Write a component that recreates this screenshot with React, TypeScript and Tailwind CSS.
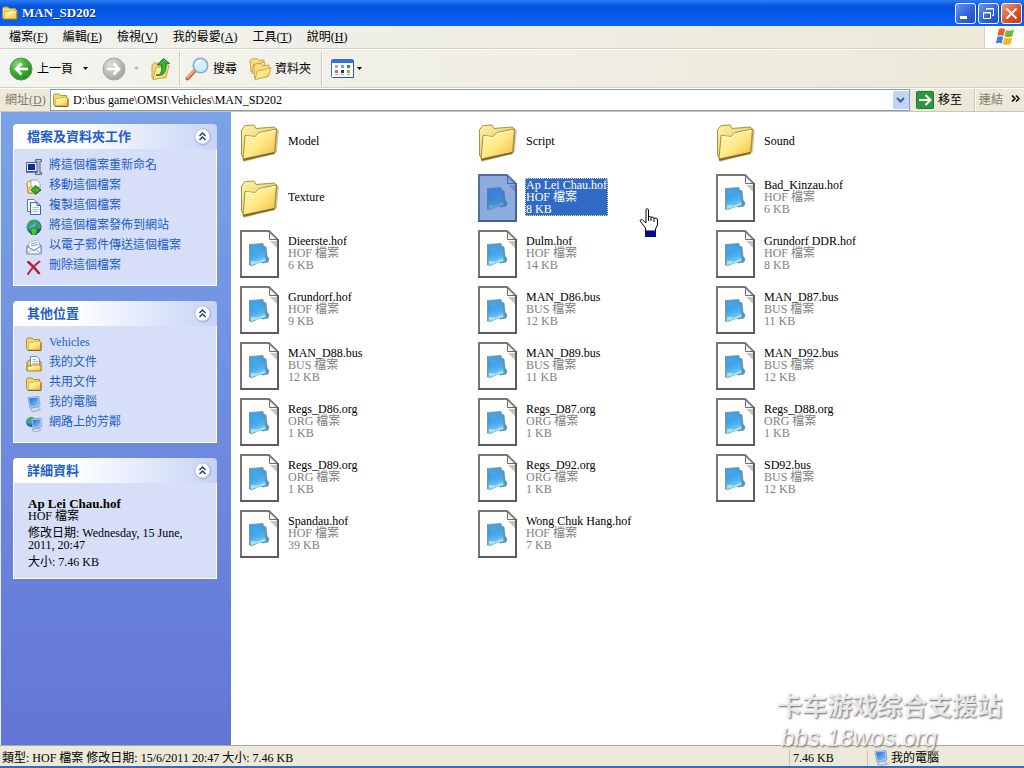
import type { ReactNode } from 'react';
import clsx from 'clsx';

const menus = [
  { label: '檔案', shortcut: 'F' },
  { label: '編輯', shortcut: 'E' },
  { label: '檢視', shortcut: 'V' },
  { label: '我的最愛', shortcut: 'A' },
  { label: '工具', shortcut: 'T' },
  { label: '說明', shortcut: 'H' },
];

const files = [
  { name: 'Model' },
  { name: 'Script' },
  { name: 'Sound' },
  { name: 'Texture' },
  { name: 'Ap Lei Chau.hof', type: 'HOF 檔案', size: '8 KB', selected: true },
  { name: 'Bad_Kinzau.hof', type: 'HOF 檔案', size: '6 KB' },
  { name: 'Dieerste.hof', type: 'HOF 檔案', size: '6 KB' },
  { name: 'Dulm.hof', type: 'HOF 檔案', size: '14 KB' },
  { name: 'Grundorf DDR.hof', type: 'HOF 檔案', size: '8 KB' },
  { name: 'Grundorf.hof', type: 'HOF 檔案', size: '9 KB' },
  { name: 'MAN_D86.bus', type: 'BUS 檔案', size: '12 KB' },
  { name: 'MAN_D87.bus', type: 'BUS 檔案', size: '11 KB' },
  { name: 'MAN_D88.bus', type: 'BUS 檔案', size: '12 KB' },
  { name: 'MAN_D89.bus', type: 'BUS 檔案', size: '11 KB' },
  { name: 'MAN_D92.bus', type: 'BUS 檔案', size: '12 KB' },
  { name: 'Regs_D86.org', type: 'ORG 檔案', size: '1 KB' },
  { name: 'Regs_D87.org', type: 'ORG 檔案', size: '1 KB' },
  { name: 'Regs_D88.org', type: 'ORG 檔案', size: '1 KB' },
  { name: 'Regs_D89.org', type: 'ORG 檔案', size: '1 KB' },
  { name: 'Regs_D92.org', type: 'ORG 檔案', size: '1 KB' },
  { name: 'SD92.bus', type: 'BUS 檔案', size: '12 KB' },
  { name: 'Spandau.hof', type: 'HOF 檔案', size: '39 KB' },
  { name: 'Wong Chuk Hang.hof', type: 'HOF 檔案', size: '7 KB' },
];

// Gradients shared by all the icons
function IconDefs() {
  return (
    <svg className="absolute h-0 w-0" aria-hidden="true">
      <defs>
        <linearGradient id="folder" x1="0" y1="0" x2="1" y2="1">
          <stop offset="0" stopColor="#fffcb8" />
          <stop offset="0.5" stopColor="#ffe988" />
          <stop offset="1" stopColor="#f0b83c" />
        </linearGradient>
        <linearGradient id="folderBack" x1="0" y1="0" x2="1" y2="1">
          <stop offset="0" stopColor="#fff3a8" />
          <stop offset="1" stopColor="#e0b548" />
        </linearGradient>
        <linearGradient id="sheet" x1="0.3" y1="0" x2="0.6" y2="1">
          <stop offset="0" stopColor="#4a9fd8" />
          <stop offset="0.4" stopColor="#3d9ee6" />
          <stop offset="1" stopColor="#84d4f4" />
        </linearGradient>
        <radialGradient id="green" cx="0.35" cy="0.3" r="0.8">
          <stop offset="0" stopColor="#8ed67e" />
          <stop offset="0.5" stopColor="#3dac34" />
          <stop offset="1" stopColor="#1f8a1c" />
        </radialGradient>
        <radialGradient id="gray" cx="0.35" cy="0.3" r="0.8">
          <stop offset="0" stopColor="#dcdcda" />
          <stop offset="0.6" stopColor="#b8b8b5" />
          <stop offset="1" stopColor="#9c9c99" />
        </radialGradient>
        <radialGradient id="globe" cx="0.35" cy="0.3" r="0.8">
          <stop offset="0" stopColor="#8fd0f4" />
          <stop offset="0.5" stopColor="#2f7fc4" />
          <stop offset="1" stopColor="#123f7d" />
        </radialGradient>
        <linearGradient id="screen" x1="0" y1="0" x2="1" y2="1">
          <stop offset="0" stopColor="#2163d6" />
          <stop offset="1" stopColor="#8fd4fb" />
        </linearGradient>
      </defs>
    </svg>
  );
}

function LargeFolder() {
  return (
    <svg viewBox="0 -2 39 50" className="h-[50px] w-[39px] shrink-0" aria-hidden="true">
      <path d="M4 43L36 34L38 12" fill="none" stroke="#b9b294" strokeWidth="2" opacity="0.6" />
      <path
        d="M1.500 37V12L4 8.500L5.500 7.500L14 7L16 10.500L34 9L37 11.500L35 34L4 41Z"
        fill="url(#folderBack)"
        stroke="#a39244"
      />
      <path
        d="M3 41L5 17.500L15 18.500L19 14.500L36.500 11L34.500 34.500Z"
        fill="url(#folder)"
        stroke="#a88f3a"
      />
      <path d="M3 42L34.500 35" stroke="#8a6a24" strokeWidth="2" />
      <path d="M6 18.500L15.500 19.500L20 15.500L35 12.500" fill="none" stroke="#fffde0" />
    </svg>
  );
}

function FileIcon({ selected }: { selected?: boolean }) {
  return (
    <svg viewBox="0 -2 39 50" className="h-[50px] w-[39px] shrink-0" aria-hidden="true">
      <path d="M1 1H29L38 10V47H1Z" fill="#fdfdfb" />
      <path d="M1 47V1H29L38 10" fill="none" stroke="#77776f" strokeWidth="2" />
      <path d="M38 9V47H0" fill="none" stroke="#5c5c58" strokeWidth="2" />
      <path d="M29.500 2V9.500H37Z" fill="#f4f4f0" stroke="#6b6b66" />
      <path d="M30 11H37V18Z" fill="#c4c4c1" />
      <path d="M23 16L26 17L27 26L29 29L28 32L22 33Z" fill="#4a9ccc" stroke="#5f7c8c" strokeWidth="0.600" />
      <path d="M9.500 14.500L23 13.500L26 31L18 33L12 35.500L10 35Z" fill="url(#sheet)" stroke="#6b9bb2" strokeWidth="0.800" />
      <path d="M11 31L18 31.500L25 28.500L25.500 31L18 33L11 35Z" fill="#a6e4f4" />
      <path d="M9.500 14V35.500" stroke="#7f97a2" />
      <path d="M12 17L22 16.500L24 26L13 28Z" fill="#4aaaf0" opacity="0.5" />
      {selected && <path d="M0 0H29L39 10V48H0Z" fill="#316ac5" opacity="0.55" />}
    </svg>
  );
}

function SmallFolder() {
  return (
    <svg viewBox="0 0 16 16" className="size-4 shrink-0" aria-hidden="true">
      <path d="M0.500 12V3.500L1.500 2H6L7.500 3.500H13.500V5.500L15 6V13L14 14.500H2Z" fill="#f3d670" stroke="#b78f2b" />
      <path d="M2.500 13.500V6.500H7L8 5.500H14.500V13.500Z" fill="url(#folder)" stroke="#d8ae40" strokeWidth="0.800" />
      <path d="M2 14.500H15V7" fill="none" stroke="#8c6a1a" />
    </svg>
  );
}

function Icon({ children }: { children: ReactNode }) {
  return (
    <svg viewBox="0 0 16 16" className="size-4 shrink-0" aria-hidden="true">
      {children}
    </svg>
  );
}

function RenameIcon() {
  return (
    <Icon>
      <path d="M0.500 3.500H12.500V12.500H0.500Z" fill="#e8ebf5" stroke="#4b5d86" />
      <path d="M2 5H9V11H2Z" fill="#0b2f9c" />
      <path d="M0 13H11" stroke="#4f587a" strokeWidth="1.500" />
      <path d="M9.500 0.500H15.500V2.500H14V13.500H15.500V15.500H9.500V13.500H11V2.500H9.500Z" fill="#bac0d4" stroke="#5b6384" />
    </Icon>
  );
}

function MoveIcon() {
  return (
    <Icon>
      <path d="M1 4L3 2H7L8 4H12V14H2Z" fill="url(#folder)" stroke="#a9882e" />
      <path d="M5 1H11L14 4V11H5Z" fill="#fff" stroke="#8797b7" strokeWidth="0.800" />
      <path d="M2 14L4 8H13L12 14Z" fill="url(#folder)" stroke="#a9882e" strokeWidth="0.800" />
      <path d="M5 11C6 8.500 8 9 9 9V6.500L15 11L9 15.500V13C7 13 6 13 5 11Z" fill="#3fb52a" stroke="#176f12" />
    </Icon>
  );
}

function CopyIcon() {
  return (
    <Icon>
      <path d="M1.500 0.500H8L10.500 3V12.500H1.500Z" fill="#fff" stroke="#5d7da1" />
      <path d="M4.500 3.500H11L14.500 6.500V15.500H4.500Z" fill="#f4faff" stroke="#3c6693" />
      <path d="M11 3.500V6.500H14.500" fill="none" stroke="#3c6693" />
      <path d="M6.500 8.500H12.500M6.500 10.500H12.500M6.500 12.500H12.500" fill="none" stroke="#9cc0e2" />
    </Icon>
  );
}

function PublishIcon() {
  return (
    <Icon>
      <circle cx="8" cy="8" r="7.500" fill="url(#globe)" />
      <path d="M3 3C6 0 8 1 9 3L6 7L3 8L1 7ZM10 2L14 5L15 9L12 10L10 6Z" fill="#39a84c" />
      <path d="M8 8L13 12.500H10.500V16H5.500V12.500H3Z" fill="#47c62f" stroke="#17721a" strokeWidth="0.800" />
    </Icon>
  );
}

function MailIcon() {
  return (
    <Icon>
      <path d="M1 7L8 2L15 6V14.500H1Z" fill="#e9c77d" stroke="#8590a6" />
      <path d="M3 3L12 1L14 8L8 11L3 9Z" fill="#fff" stroke="#92a8ce" strokeWidth="0.700" />
      <path d="M5 5L11 3.500M5 7L12 5.500" stroke="#6c9bdb" />
      <path d="M1 7.500L8 11.500L15 7V15H1Z" fill="#f5f9ff" stroke="#7287ad" />
      <path d="M1 15L6 10.500M15 15L10 10.500" stroke="#9aabc9" />
    </Icon>
  );
}

function DeleteIcon() {
  return (
    <Icon>
      <path d="M1 3L3 2.500C6 5 11 10 14 14.500L12.500 15C9 10.500 5 6.500 1 3Z" fill="#b51b33" stroke="#b51b33" />
      <path d="M13.500 2.500C9 6 5 10 2 15" fill="none" stroke="#c0223a" strokeWidth="2" strokeLinecap="round" />
    </Icon>
  );
}

function DocumentsIcon() {
  return (
    <Icon>
      <path d="M1 6L3 4H13L15 6V14.500H1Z" fill="#f0cf62" stroke="#a77f1b" />
      <path d="M4.500 0.500H11L13.500 3V10H4.500Z" fill="#fff" stroke="#6b8fbd" />
      <path d="M6.500 3.500H10M6.500 5.500H12M6.500 7.500H12" stroke="#8fb8e6" />
      <path d="M1 10H5L6 9H15V15H1Z" fill="url(#folder)" stroke="#a77f1b" />
    </Icon>
  );
}

function ComputerIcon() {
  return (
    <Icon>
      <path d="M6 12L12 11L14.500 14L7 15.500L4 14Z" fill="#d9dde8" stroke="#8790a6" strokeWidth="0.700" />
      <path d="M2 1.500L13 0.500L14 10L4 12Z" fill="#c5ddf7" stroke="#7b9ecb" strokeWidth="0.800" />
      <path d="M3 2.500L12 1.500L13 9.300L4.800 10.800Z" fill="url(#screen)" />
    </Icon>
  );
}

function NetworkIcon() {
  return (
    <Icon>
      <circle cx="5" cy="6" r="5" fill="url(#globe)" />
      <path d="M1 4L4 1L7 2L5 5L2 7Z" fill="#3fae4b" />
      <path d="M8 13L13 12L15 14L9 16L6 14Z" fill="#d9dde8" stroke="#8790a6" strokeWidth="0.700" />
      <path d="M5.500 3L15 2L15.500 11L7 12.500Z" fill="#c5ddf7" stroke="#7b9ecb" strokeWidth="0.800" />
      <path d="M6.500 4L14 3.200L14.500 10.200L7.800 11.400Z" fill="url(#screen)" />
    </Icon>
  );
}

function RoundArrow({ forward }: { forward?: boolean }) {
  return (
    <svg viewBox="0 0 24 24" className="size-6 shrink-0" aria-hidden="true">
      <circle cx="12" cy="12" r="11" fill={forward ? 'url(#gray)' : 'url(#green)'} stroke={forward ? '#a5a5a2' : '#57965a'} />
      <path
        d={forward ? 'M5 12H17M11.500 6.500L17 12L11.500 17.500' : 'M19 12H7M12.500 6.500L7 12L12.500 17.500'}
        fill="none"
        stroke="#fff"
        strokeWidth="2.600"
      />
    </svg>
  );
}

function UpFolderIcon() {
  return (
    <svg viewBox="0 0 20 24" className="h-6 w-5" aria-hidden="true">
      <path d="M1 21V8L3 6H7L9 8H14V20Z" fill="#f2d774" stroke="#c9a542" />
      <path d="M2 22.500L5 11L18 8.500L15 20.500Z" fill="url(#folder)" stroke="#c9a542" />
      <path d="M5 18C11 18.500 11 13 10.500 8H6L12.500 1.500L18.500 6.500L15 7C15.500 13 14 20 5 18Z" fill="#3bb33a" stroke="#1d7c24" />
    </svg>
  );
}

function SearchIcon() {
  return (
    <svg viewBox="0 0 24 24" className="size-6" aria-hidden="true">
      <path d="M2.500 21.500L9 14.500" stroke="#b96a3c" strokeWidth="4" strokeLinecap="round" />
      <path d="M2.500 20.500L9 13.500" stroke="#f2ac78" strokeWidth="2" strokeLinecap="round" />
      <circle cx="15.500" cy="8.500" r="7.200" fill="#cfeefc" stroke="#8ba6d2" strokeWidth="1.600" />
      <path d="M11 8C11 5 13 4 16 4" fill="none" stroke="#fff" strokeWidth="2" />
    </svg>
  );
}

function FoldersIcon() {
  return (
    <svg viewBox="0 0 24 24" className="size-6" aria-hidden="true">
      <path d="M2 15L1 4L2.500 2L8 1.500L10 3.500L15 3V8Z" fill="#f6dd84" stroke="#cda646" />
      <path d="M3 16.500L4.500 7.500L16 5L15 14Z" fill="url(#folder)" stroke="#cda646" />
      <path d="M5.500 21L5 9L6.500 7L12 6.500L14 9L20 8V12Z" fill="#f6dd84" stroke="#cda646" />
      <path d="M6 22.500L8.500 13.500L14 13L22 10.500L19.500 19.500Z" fill="url(#folder)" stroke="#cda646" />
    </svg>
  );
}

function ViewsIcon() {
  return (
    <svg viewBox="0 0 24 20" className="h-5 w-6" aria-hidden="true">
      <rect x="0.500" y="0.500" width="22" height="18" rx="1" fill="#fdfdfd" stroke="#3d72b8" />
      <path d="M1 1H22V4H1Z" fill="#2f74d8" />
      <path d="M22.500 2V18.500H2" fill="none" stroke="#2b5ba6" />
      <path d="M4 6h3v3h-3z" fill="#b6a8ae" />
      <path d="M10 6h3v3h-3z" fill="#8d94cf" />
      <path d="M16 6h3v3h-3z" fill="#2c9340" />
      <path d="M4 11h3v3h-3z" fill="#d2714f" />
      <path d="M10 11h3v3h-3z" fill="#16357f" />
      <path d="M16 11h3v3h-3z" fill="#cf9c48" />
      <path d="M4 15.500h3M10 15.500h3M16 15.500h3" stroke="#a9b0ba" />
    </svg>
  );
}

function WindowsFlag() {
  return (
    <svg viewBox="0 0 20 18" className="h-[18px] w-5" aria-hidden="true">
      <path d="M4 1C6 0 8 0 10 1.500L8.500 8C6.500 7 4.500 7 2.500 8Z" fill="#ea5b2c" />
      <path d="M11 2C13 3 16 3 19 1.500L17.500 8C15 9.500 12 9.500 9.500 8.500Z" fill="#76b82f" />
      <path d="M2.300 9C4 8 6 8 8.200 9L6.700 15.500C5 14.500 3 14.500 0.800 15.500Z" fill="#3c7fd6" />
      <path d="M9.300 9.500C12 10.500 15 10.500 17.200 9.200L15.700 15.800C13 17.500 10 17.200 7.700 16Z" fill="#f4b92a" />
    </svg>
  );
}

function Caret({ muted }: { muted?: boolean }) {
  return (
    <svg viewBox="0 0 5 3" className="h-[3px] w-[5px] shrink-0" aria-hidden="true">
      <path d="M0 0H5L2.500 3Z" fill={muted ? '#b5b3a6' : '#000'} />
    </svg>
  );
}

function Separator() {
  return <div className="h-[34px] w-[2px] border-l border-[#cbc8b8] bg-white" />;
}

function CaptionButton({ label, close, children }: { label: string; close?: boolean; children: ReactNode }) {
  return (
    <button
      type="button"
      aria-label={label}
      className={clsx(
        'size-[21px] rounded-[3px] border border-white',
        close
          ? 'bg-linear-to-br from-[#e99a80] via-[#dc5a35] to-[#b83a16]'
          : 'bg-linear-to-br from-[#6a94f0] via-[#3468de] to-[#1c4bc8]',
      )}
    >
      <svg viewBox="0 0 19 19" className="size-[19px]" fill="none" stroke="#fff" aria-hidden="true">
        {children}
      </svg>
    </button>
  );
}

function Panel({ title, children }: { title: string; children: ReactNode }) {
  return (
    <section>
      <header className="flex h-[25px] items-center justify-between rounded-t-[4px] bg-linear-to-r from-white from-30% to-[#c6d3f7] pr-[5px] pl-[14px]">
        <h2 className="text-[13px] leading-[18px] font-bold text-[#215dc6]">{title}</h2>
        <button type="button" aria-label={title}>
          <svg viewBox="0 0 19 19" className="size-[19px]" aria-hidden="true">
            <circle cx="10" cy="10" r="8.500" fill="#a9b5d6" />
            <circle cx="9.500" cy="9.500" r="7.500" fill="#fff" stroke="#c3cbe0" />
            <path d="M6.500 9L9.500 6L12.500 9M6.500 13L9.500 10L12.500 13" fill="none" stroke="#1d3f7f" strokeWidth="1.500" />
          </svg>
        </button>
      </header>
      <div className="border border-t-0 border-white bg-[#d6dff7]">{children}</div>
    </section>
  );
}

function TaskLink({ icon, children }: { icon: ReactNode; children: ReactNode }) {
  return (
    <li>
      <a href="#" className="flex h-5 items-center gap-[7px] text-[#215dc6]">
        <span className="pt-1">{icon}</span>
        {children}
      </a>
    </li>
  );
}

function TitleBar() {
  return (
    <header className="flex h-[26px] shrink-0 items-center gap-1 bg-linear-to-b from-[#2a7cf3] via-[#0453de] via-25% to-[#0a62fb] pr-[2px] pl-[2px]">
      <SmallFolder />
      <h1 className="flex-1 text-[13px] leading-[18px] font-bold text-white [text-shadow:1px_1px_0_#0a2f8a]">MAN_SD202</h1>
      <div className="flex gap-[2px]">
        <CaptionButton label="最小化">
          <path d="M4 13.500H11" strokeWidth="3" />
        </CaptionButton>
        <CaptionButton label="還原">
          <path d="M4.500 8.500H11.500V14.500H4.500ZM4 9H12M7.500 6V4.500H14.500V11.500H13M7 5H15" />
        </CaptionButton>
        <CaptionButton label="關閉" close>
          <path d="M4.500 4.500L14.500 14.500M14.500 4.500L4.500 14.500" strokeWidth="2" />
        </CaptionButton>
      </div>
    </header>
  );
}

function MenuBar() {
  return (
    <nav className="flex h-[23px] shrink-0 border-b border-[#d6d2c2] bg-linear-to-r from-[#f2f2ee] to-[#ece9d8]">
      <div className="flex flex-1 items-center gap-[15px] pl-[9px]">
        {menus.map((menu) => (
          <button key={menu.shortcut} type="button">
            {menu.label}(<u>{menu.shortcut}</u>)
          </button>
        ))}
      </div>
      <div className="flex w-10 items-center justify-center border-l border-[#d6d2c2] bg-white">
        <WindowsFlag />
      </div>
    </nav>
  );
}

function Toolbar() {
  return (
    <div className="flex h-[39px] shrink-0 items-center border-t border-b border-t-white border-b-[#d6d2c2] bg-linear-to-r from-[#f4f4f0] to-[#ece9d8] pl-[9px]">
      <button type="button" className="flex items-center gap-1">
        <RoundArrow />
        上一頁
      </button>
      <button type="button" aria-label="上一頁清單" className="px-[10px]">
        <Caret />
      </button>
      <button type="button" aria-label="下一頁" className="ml-1 flex items-center gap-2">
        <RoundArrow forward />
        <Caret muted />
      </button>
      <button type="button" aria-label="上移" className="mr-2 ml-3">
        <UpFolderIcon />
      </button>
      <Separator />
      <button type="button" className="ml-1 flex items-center gap-1">
        <SearchIcon />
        搜尋
      </button>
      <button type="button" className="mr-[10px] ml-3 flex items-center gap-[2px]">
        <FoldersIcon />
        資料夾
      </button>
      <Separator />
      <button type="button" aria-label="檢視" className="ml-2 flex items-center gap-[2px]">
        <ViewsIcon />
        <Caret />
      </button>
    </div>
  );
}

function AddressBar() {
  return (
    <div className="flex h-6 shrink-0 items-center border-t border-b border-t-white border-b-[#c9c6b6] bg-[#ece9d8]">
      <label htmlFor="address" className="w-[50px] pl-[5px] text-[#7d7b70]">
        網址(<u>D</u>)
      </label>
      <div className="flex h-[22px] flex-1 items-center border border-[#7f9db9] bg-white pl-[2px]">
        <SmallFolder />
        <input
          id="address"
          defaultValue="D:\bus game\OMSI\Vehicles\MAN_SD202"
          className="h-5 min-w-0 flex-1 pl-1 outline-none"
        />
        <button type="button" aria-label="網址清單" className="flex h-[18px] w-4 items-center justify-center rounded-[2px] bg-[#c2d3fb]">
          <svg viewBox="0 0 9 6" className="h-[6px] w-[9px]" aria-hidden="true">
            <path d="M1 1L4.500 4.500L8 1" fill="none" stroke="#4d6185" strokeWidth="2" />
          </svg>
        </button>
      </div>
      <button type="button" className="flex items-center gap-1 pr-3 pl-[6px]">
        <svg viewBox="0 0 18 18" className="size-[18px]" aria-hidden="true">
          <rect x="0.500" y="0.500" width="17" height="17" rx="1" fill="#2a9a3c" stroke="#1d7a30" />
          <path d="M3 9H14M9.500 4L14.500 9L9.500 14" fill="none" stroke="#fff" strokeWidth="2" />
        </svg>
        移至
      </button>
      <div className="h-[22px] w-[2px] border-l border-[#cbc8b8] bg-white" />
      <button type="button" className="flex items-center gap-2 pr-1 pl-[3px] text-[#7d7b70]">
        連結
        <svg viewBox="0 0 9 7" className="mb-1 h-[7px] w-[9px]" aria-hidden="true">
          <path d="M1 0.500L4 3.500L1 6.500M5 0.500L8 3.500L5 6.500" fill="none" stroke="#000" strokeWidth="1.500" />
        </svg>
      </button>
    </div>
  );
}

function Sidebar() {
  return (
    <aside className="flex w-[231px] shrink-0 flex-col gap-[15px] border-l border-[#e8ecf8] bg-linear-to-b from-[#7ba2e7] to-[#6375d6] py-3 pr-[14px] pl-3">
      <Panel title="檔案及資料夾工作">
        <ul className="pt-[6px] pb-[10px] pl-3">
          <TaskLink icon={<RenameIcon />}>將這個檔案重新命名</TaskLink>
          <TaskLink icon={<MoveIcon />}>移動這個檔案</TaskLink>
          <TaskLink icon={<CopyIcon />}>複製這個檔案</TaskLink>
          <TaskLink icon={<PublishIcon />}>將這個檔案發佈到網站</TaskLink>
          <TaskLink icon={<MailIcon />}>以電子郵件傳送這個檔案</TaskLink>
          <TaskLink icon={<DeleteIcon />}>刪除這個檔案</TaskLink>
        </ul>
      </Panel>
      <Panel title="其他位置">
        <ul className="pt-[6px] pb-[10px] pl-3">
          <TaskLink icon={<SmallFolder />}>Vehicles</TaskLink>
          <TaskLink icon={<DocumentsIcon />}>我的文件</TaskLink>
          <TaskLink icon={<SmallFolder />}>共用文件</TaskLink>
          <TaskLink icon={<ComputerIcon />}>我的電腦</TaskLink>
          <TaskLink icon={<NetworkIcon />}>網路上的芳鄰</TaskLink>
        </ul>
      </Panel>
      <Panel title="詳細資料">
        <div className="flex flex-col gap-[5px] pt-[15px] pr-6 pb-[10px] pl-[14px]">
          <div>
            <h3 className="text-[13px] leading-[12px] font-bold">Ap Lei Chau.hof</h3>
            <p>HOF 檔案</p>
          </div>
          <p>修改日期: Wednesday, 15 June, 2011, 20:47</p>
          <p>大小: 7.46 KB</p>
        </div>
      </Panel>
    </aside>
  );
}

function FileList() {
  return (
    <main className="relative flex-1 bg-white pt-px pl-[9px]">
      <ul className="grid grid-cols-[repeat(auto-fill,238px)]">
        {files.map((file) => (
          <li key={file.name} className="flex h-14">
            <button type="button" className="flex items-center gap-2 text-left">
              {file.type ? <FileIcon selected={file.selected} /> : <LargeFolder />}
              <span
                className={clsx(
                  'border whitespace-nowrap',
                  file.selected ? 'border-dotted border-[#f0d8a0] bg-[#316ac5] text-white' : 'border-transparent',
                )}
              >
                <span className="block">{file.name}</span>
                {file.type && (
                  <span className={clsx('block', !file.selected && 'text-[#808080]')}>
                    {file.type}
                    <br />
                    {file.size}
                  </span>
                )}
              </span>
            </button>
          </li>
        ))}
      </ul>

      {/* Hand cursor */}
      <svg viewBox="0 0 20 30" className="absolute top-[96px] left-[408px] h-[30px] w-5" aria-hidden="true">
        <path
          d="M7 1.500C7 0.500 9.500 0.500 9.500 2V9C10 8 12 8.500 12 9.500C13 8.500 15 9 15 10.500C16 9.500 18.500 10 18.500 12V17L16.500 21V23H6.500V20L1.500 13.500C0.500 12 2 11 3.500 12L7 15Z"
          fill="#fff"
          stroke="#000"
        />
        <path d="M9.500 8V13M12 9.500V13M15 10.500V14" stroke="#000" />
        <path d="M6 23H17V29H6Z" fill="#0a0a8c" />
      </svg>
    </main>
  );
}

function StatusBar() {
  return (
    <footer className="flex h-[23px] shrink-0 items-center border-t border-b-2 border-t-[#aca899] border-b-[#2f6cc9] bg-[#ece9d8] pt-[3px]">
      <p className="flex-1 pl-[2px]">類型: HOF 檔案 修改日期: 15/6/2011 20:47 大小: 7.46 KB</p>
      <p className="w-[78px] border-l border-[#c5c2b2] pl-[3px] leading-[16px]">7.46 KB</p>
      <p className="flex w-[157px] items-center gap-[2px] border-l border-[#c5c2b2] pl-[5px] leading-[16px]">
        <ComputerIcon />
        我的電腦
      </p>
    </footer>
  );
}

export default function App() {
  return (
    <div className="relative flex min-h-screen flex-col bg-[#ece9d8] font-['Liberation_Serif','Noto_Sans_CJK_TC',serif] text-[12px] leading-[12px] text-black">
      <IconDefs />
      <TitleBar />
      <MenuBar />
      <Toolbar />
      <AddressBar />
      <div className="flex flex-1">
        <Sidebar />
        <FileList />
      </div>
      <StatusBar />
      <div className="pointer-events-none absolute right-[19px] bottom-[14px] w-[228px] font-['Liberation_Sans','Noto_Sans_CJK_SC',sans-serif] text-[25px] leading-[32px] font-bold whitespace-nowrap text-white/80 [text-shadow:1px_1px_2px_#666]">
        <p>卡车游戏综合支援站</p>
        <p className="pl-1 text-[24px] font-normal italic">bbs.18wos.org</p>
      </div>
    </div>
  );
}
